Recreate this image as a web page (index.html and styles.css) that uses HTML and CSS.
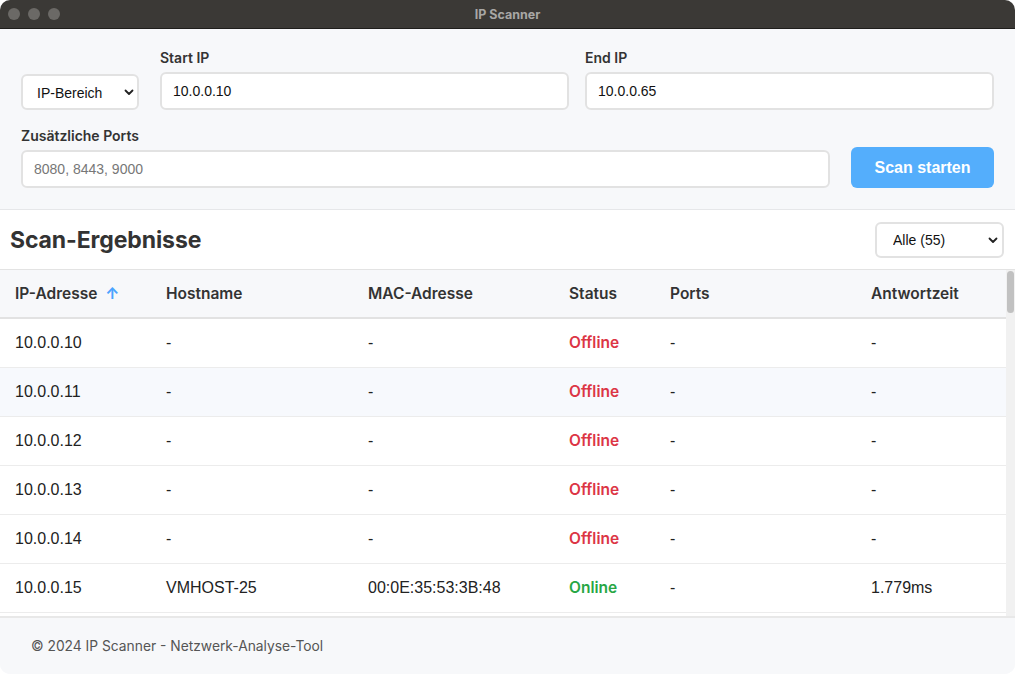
FILE: index.html
```html
<!DOCTYPE html>
<html lang="de">
<head>
<meta charset="utf-8">
<title>IP Scanner</title>
<link rel="stylesheet" href="styles.css">
</head>
<body>
<div class="window">
  <div class="titlebar">
    <div class="lights"><span></span><span></span><span></span></div>
    <div class="title">IP Scanner</div>
  </div>
  <section class="controls">
    <div class="row">
      <div class="select-wrap mode">
        <select class="select"><option>IP-Bereich</option></select>
        <svg class="chev" width="10" height="7" viewBox="0 0 10 7"><path d="M1.5 1.5 L5 5 L8.5 1.5" fill="none" stroke="#222" stroke-width="1.8" stroke-linecap="round" stroke-linejoin="round"/></svg>
      </div>
      <div class="field">
        <label class="label">Start IP</label>
        <input class="input" value="10.0.0.10">
      </div>
      <div class="field">
        <label class="label">End IP</label>
        <input class="input" value="10.0.0.65">
      </div>
    </div>
    <div class="row row2">
      <div class="field">
        <label class="label">Zusätzliche Ports</label>
        <input class="input" placeholder="8080, 8443, 9000">
      </div>
      <button class="btn">Scan starten</button>
    </div>
  </section>
  <section class="results">
    <div class="results-head">
      <h2>Scan-Ergebnisse</h2>
      <div class="select-wrap filter">
        <select class="select"><option>Alle (55)</option></select>
        <svg class="chev" width="10" height="7" viewBox="0 0 10 7"><path d="M1.5 1.5 L5 5 L8.5 1.5" fill="none" stroke="#222" stroke-width="1.8" stroke-linecap="round" stroke-linejoin="round"/></svg>
      </div>
    </div>
    <div class="table-area">
      <div class="table-scroll">
        <table class="table">
          <colgroup>
            <col style="width:151px"><col style="width:202px"><col style="width:201px"><col style="width:101px"><col style="width:201px"><col>
          </colgroup>
          <thead>
            <tr>
              <th>IP-Adresse <span class="sort">↑</span></th>
              <th>Hostname</th>
              <th>MAC-Adresse</th>
              <th>Status</th>
              <th>Ports</th>
              <th>Antwortzeit</th>
            </tr>
          </thead>
          <tbody>
            <tr><td>10.0.0.10</td><td>-</td><td>-</td><td><span class="st off">Offline</span></td><td>-</td><td>-</td></tr>
            <tr class="alt"><td>10.0.0.11</td><td>-</td><td>-</td><td><span class="st off">Offline</span></td><td>-</td><td>-</td></tr>
            <tr><td>10.0.0.12</td><td>-</td><td>-</td><td><span class="st off">Offline</span></td><td>-</td><td>-</td></tr>
            <tr><td>10.0.0.13</td><td>-</td><td>-</td><td><span class="st off">Offline</span></td><td>-</td><td>-</td></tr>
            <tr><td>10.0.0.14</td><td>-</td><td>-</td><td><span class="st off">Offline</span></td><td>-</td><td>-</td></tr>
            <tr><td>10.0.0.15</td><td>VMHOST-25</td><td>00:0E:35:53:3B:48</td><td><span class="st on">Online</span></td><td>-</td><td>1.779ms</td></tr>
          </tbody>
        </table>
      </div>
      <div class="scrollbar"><div class="thumb"></div></div>
    </div>
  </section>
  <footer class="footer">© 2024 IP Scanner - Netzwerk-Analyse-Tool</footer>
</div>
</body>
</html>
```
FILE: styles.css
```css
* { box-sizing: border-box; }
html, body { margin: 0; padding: 0; background: #ffffff; }
body { width: 1015px; height: 674px; overflow: hidden; font-family: Inter, "Liberation Sans", sans-serif; color: #333; }

.window {
  width: 1015px; height: 674px;
  border-radius: 10px; overflow: hidden;
  background: #f7f8fa;
  display: flex; flex-direction: column;
}

.titlebar {
  height: 29px; flex: none;
  background: #3b3936;
  border-bottom: 1px solid #1f1e1c;
  display: flex; align-items: center; position: relative;
}
.lights { display: flex; gap: 8px; padding-left: 8px; }
.lights span { width: 12px; height: 12px; border-radius: 50%; background: #6b6966; }
.title {
  position: absolute; left: 0; right: 0; text-align: center;
  font-family: Inter, sans-serif; font-weight: 700; font-size: 12.5px; color: #a8a7a5;
}

.controls {
  flex: none;
  padding: 20px 21px 21px 21px;
  border-bottom: 1px solid #e6e7e9;
  display: flex; flex-direction: column; gap: 17px;
}
.row { display: flex; align-items: flex-end; gap: 16px; }
.row2 { gap: 21px; }
.field { flex: 1; display: flex; flex-direction: column; }
.label { font-family: Inter, sans-serif; font-weight: 600; font-size: 14px; color: #333; height: 17px; line-height: 17px; margin-bottom: 6px; }
.input {
  height: 38px; border: 2px solid #e2e2e2; border-radius: 6px; background: #fff;
  padding: 0 11px; font-family: "Liberation Sans", Arial, sans-serif; font-size: 14px; color: #111; outline: none;
}
.input::placeholder { color: #777; }

.select-wrap { position: relative; flex: none; }
.select {
  appearance: none; -webkit-appearance: none;
  height: 36px; border: 2px solid #e2e2e2; border-radius: 6px; background: #fff;
  font-family: "Liberation Sans", Arial, sans-serif; font-size: 14px; color: #111;
  padding: 2px 28px 0 14px; outline: none;
}
.chev { position: absolute; top: 15px; pointer-events: none; }
.mode { margin-right: 5px; }
.mode .select { width: 118px; }
.mode .chev { left: 103px; }
.filter .select { width: 129px; padding-left: 16px; padding-top: 0; }
.filter .chev { left: 113px; }

.btn {
  flex: none; width: 143px; height: 41px; border: none; border-radius: 6px;
  background: #54aefc; color: #fff;
  font-family: "Liberation Sans", Arial, sans-serif; font-weight: 700; font-size: 16px;
}

.results { flex: 1; min-height: 0; background: #fff; display: flex; flex-direction: column; }
.results-head {
  height: 59px; flex: none;
  display: flex; align-items: center; justify-content: space-between;
  padding: 1px 11px 0 10px;
}
.results-head h2 { margin: 0; font-family: Inter, sans-serif; font-weight: 700; font-size: 23px; color: #333; letter-spacing: -0.1px; }

.table-area {
  flex: 1; min-height: 0; display: flex;
  border-top: 1px solid #e3e3e3;
}
.table-scroll { flex: 1; min-width: 0; overflow: hidden; }
.scrollbar { flex: none; width: 9px; background: #f1f1f1; padding: 1px 1px 0 1px; }
.thumb { height: 42px; border-radius: 4px; background: #c1c1c1; }

.table { width: 100%; border-collapse: collapse; table-layout: fixed; }
.table th {
  text-align: left; height: 48px; padding: 0 15px;
  background: #f7f8fa; border-bottom: 2px solid #e2e2e2;
  font-family: Inter, sans-serif; font-weight: 600; font-size: 15.5px; color: #333;
}
.sort { color: #4aa3ff; margin-left: 4px; font-weight: 700; }
.table td {
  height: 49px; padding: 0 15px; border-bottom: 1px solid #ececec;
  font-family: "Liberation Sans", Arial, sans-serif; font-size: 16px; color: #222;
}
.table tr.alt td { background: #f7f9fd; }
.st { font-family: Inter, sans-serif; font-weight: 600; font-size: 15.5px; }
.st.off { color: #dc3545; }
.st.on { color: #28a745; }

.footer {
  height: 58px; flex: none;
  border-top: 2px solid #e8e8e8;
  background: #f7f8fa;
  display: flex; align-items: center; padding-left: 31px;
  font-family: Inter, sans-serif; font-size: 13.8px; color: #555;
}
```
